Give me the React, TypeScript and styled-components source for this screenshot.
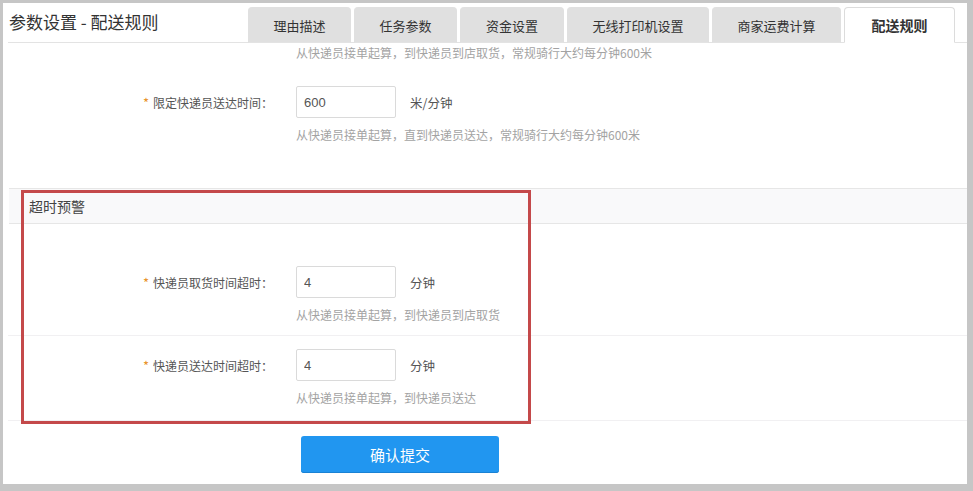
import React from 'react';
import styled, {createGlobalStyle} from 'styled-components';

const GlobalStyle = createGlobalStyle`
    html, body {
        margin: 0;
        padding: 0;
        background: #c6c6c6;
    }
    * {
        box-sizing: border-box;
    }
    body {
        font-family: "Noto Sans CJK SC", "Noto Sans", "Liberation Sans", sans-serif;
    }
`

type Tab = {
    title: string
    width: number
    active?: boolean
}

const tabs: Tab[] = [
    {title: '理由描述', width: 103},
    {title: '任务参数', width: 103},
    {title: '资金设置', width: 104},
    {title: '无线打印机设置', width: 142},
    {title: '商家运费计算', width: 129},
    {title: '配送规则', width: 111, active: true},
]

type FieldProps = {
    label: string
    value: string
    unit: string
    hint: string
    top: number
    bottom: number
    divider?: boolean
}

const Field: React.FC<FieldProps> = ({label, value, unit, hint, top, bottom, divider}) => {
    return (
        <FieldBlock $top={top} $bottom={bottom} $divider={divider}>
            <Row>
                <Label><Star>*</Star>{label}</Label>
                <Input defaultValue={value}/>
                <Unit>{unit}</Unit>
            </Row>
            <Hint>{hint}</Hint>
        </FieldBlock>
    )
}

export default function App() {
    return (
        <Page>
            <GlobalStyle/>
            <Panel>
                <Header>
                    <Title>参数设置 - 配送规则</Title>
                    <Tabs>
                        {tabs.map(t =>
                            <TabItem key={t.title} $width={t.width} $active={t.active}>{t.title}</TabItem>
                        )}
                    </Tabs>
                </Header>
                <TopHint>从快递员接单起算，到快递员到店取货，常规骑行大约每分钟600米</TopHint>
                <Field label={'限定快递员送达时间：'}
                       value={'600'}
                       unit={'米/分钟'}
                       hint={'从快递员接单起算，直到快递员送达，常规骑行大约每分钟600米'}
                       top={24}
                       bottom={43}
                />
                <SectionHead>超时预警</SectionHead>
                <Field label={'快递员取货时间超时：'}
                       value={'4'}
                       unit={'分钟'}
                       hint={'从快递员接单起算，到快递员到店取货'}
                       top={42}
                       bottom={11}
                       divider
                />
                <Field label={'快递员送达时间超时：'}
                       value={'4'}
                       unit={'分钟'}
                       hint={'从快递员接单起算，到快递员送达'}
                       top={13}
                       bottom={13}
                       divider
                />
                <Actions>
                    <SubmitButton>确认提交</SubmitButton>
                </Actions>
                <Highlight/>
            </Panel>
        </Page>
    );
}

const Page = styled.div`
    width: 973px;
    height: 491px;
    padding: 3px 6px 7px 3px;
    background: #c6c6c6;
    display: flex;
`

const Panel = styled.div`
    position: relative;
    flex: 1;
    background: #ffffff;
    overflow: hidden;
    display: flex;
    flex-direction: column;
`

const Header = styled.div`
    height: 40px;
    margin-left: 5px;
    padding-right: 12px;
    display: flex;
    justify-content: space-between;
    border-bottom: 1px solid #e3e3e3;
`

const Title = styled.div`
    padding: 8px 0 0 1px;
    font-size: 17px;
    line-height: 22px;
    color: #333;
`

const Tabs = styled.div`
    display: flex;
    align-items: flex-end;
    gap: 3px;
`

const TabItem = styled.div<{ $width: number, $active?: boolean }>`
    width: ${p => p.$width}px;
    height: 36px;
    margin-bottom: -1px;
    display: flex;
    align-items: center;
    justify-content: center;
    font-size: 13px;
    color: #333;
    border-radius: 4px 4px 0 0;
    background: ${p => p.$active ? '#ffffff' : '#e0e0e0'};
    border: 1px solid ${p => p.$active ? '#dcdcdc' : '#e0e0e0'};
    border-bottom: ${p => p.$active ? '1px solid #ffffff' : '1px solid #e3e3e3'};
    font-weight: ${p => p.$active ? 700 : 400};
    font-size: ${p => p.$active ? '14px' : '13px'};
`

const TopHint = styled.div`
    margin: 1px 0 0 293px;
    font-size: 12px;
    line-height: 18px;
    color: #a3a3a3;
`

const FieldBlock = styled.div<{ $top: number, $bottom: number, $divider?: boolean }>`
    margin-left: 5px;
    padding: ${p => p.$top}px 0 ${p => p.$bottom}px;
    border-bottom: 1px solid ${p => p.$divider ? '#f1f0f2' : 'transparent'};
`

const Row = styled.div`
    display: flex;
    align-items: center;
    height: 32px;
`

const Label = styled.div`
    width: 265px;
    text-align: right;
    font-size: 12px;
    color: #555;
    margin-right: 23px;
    white-space: nowrap;
`

const Star = styled.span`
    color: #e8922b;
    margin-right: 4px;
    font-size: 13px;
`

const Input = styled.input`
    width: 100px;
    height: 32px;
    padding: 0 7px;
    border: 1px solid #dadada;
    border-radius: 2px;
    font-family: "Liberation Sans", "Noto Sans CJK SC", sans-serif;
    font-size: 13px;
    color: #555;
    outline: none;
`

const Unit = styled.span`
    margin-left: 14px;
    font-size: 12.5px;
    color: #555;
`

const Hint = styled.div`
    margin: 8px 0 0 288px;
    font-size: 12px;
    line-height: 18px;
    color: #a3a3a3;
`

const SectionHead = styled.div`
    margin-left: 6px;
    height: 36px;
    padding-left: 20px;
    display: flex;
    align-items: center;
    font-size: 14px;
    color: #444;
    background: #f9f9fa;
    border-top: 1px solid #e6e6e6;
    border-bottom: 1px solid #e6e6e6;
`

const Actions = styled.div`
    padding: 15px 0 0 298px;
`

const SubmitButton = styled.button`
    width: 198px;
    height: 37px;
    border: none;
    border-radius: 3px;
    background: #2196f0;
    box-shadow: inset 0 -1px 0 #1a82d4;
    color: #fff;
    font-family: "Noto Sans CJK SC", sans-serif;
    font-size: 15px;
    cursor: pointer;
`

// annotation box drawn over the screenshot
const Highlight = styled.div`
    position: absolute;
    left: 18px;
    top: 187px;
    width: 510px;
    height: 234px;
    border: 3px solid #c4494a;
    pointer-events: none;
`
